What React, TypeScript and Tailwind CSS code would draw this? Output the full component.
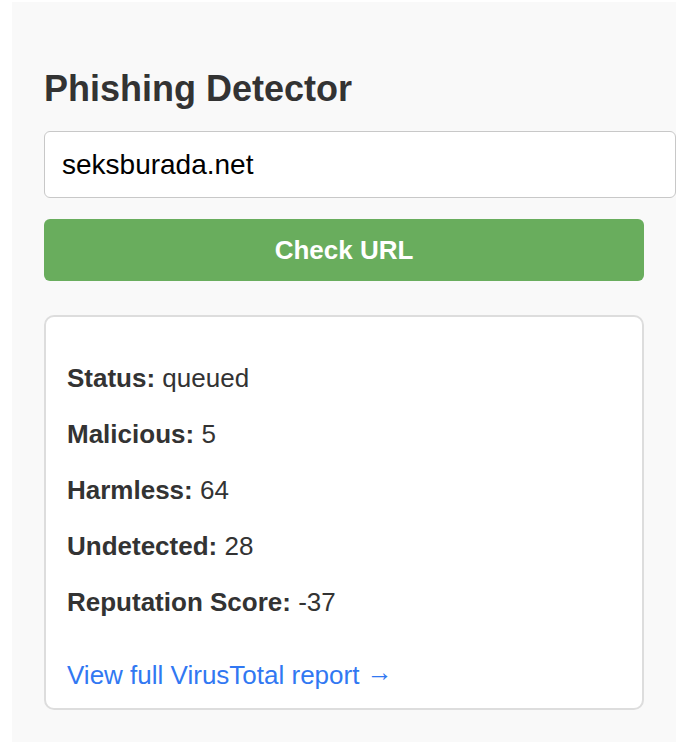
import React from "react";

export default function App() {
  const rows: [string, string][] = [
    ["Status:", "queued"],
    ["Malicious:", "5"],
    ["Harmless:", "64"],
    ["Undetected:", "28"],
    ["Reputation Score:", "-37"],
  ];
  return (
    <div className="w-[678px] h-[748px] bg-white pt-[2px] pl-[12px]" style={{ fontFamily: '"Liberation Sans", Arial, sans-serif' }}>
      <div className="w-[664px] h-[740px] bg-[#f9f9f9] px-[32px] pt-[66px] flex flex-col text-[#333]">
        <h1 className="text-[36px] leading-[42px] font-bold text-[#333]">Phishing Detector</h1>
        <input
          className="mt-[21px] w-[632px] h-[67px] shrink-0 bg-white border border-[#c8c8c8] rounded-[6px] px-[17px] text-[28px] text-black outline-none"
          defaultValue="seksburada.net"
        />
        <button className="mt-[21px] w-[600px] h-[62px] shrink-0 bg-[#69ad5d] rounded-[6px] text-white text-[26px] font-bold">
          Check URL
        </button>
        <div className="mt-[34px] w-[600px] h-[395px] shrink-0 bg-white border-2 border-[#dddddd] rounded-[10px] px-[21px] pt-[46px] flex flex-col">
          <div className="flex flex-col gap-[26px]">
            {rows.map(([k, v]) => (
              <p key={k} className="text-[26px] leading-[30px] text-[#333]">
                <span className="font-bold">{k}</span> {v}
              </p>
            ))}
          </div>
          <a href="#" className="mt-[43px] text-[26px] leading-[30px] text-[#3178f2]">
            View full VirusTotal report <span className="inline-block -translate-y-[3px]">→</span>
          </a>
        </div>
      </div>
    </div>
  );
}
